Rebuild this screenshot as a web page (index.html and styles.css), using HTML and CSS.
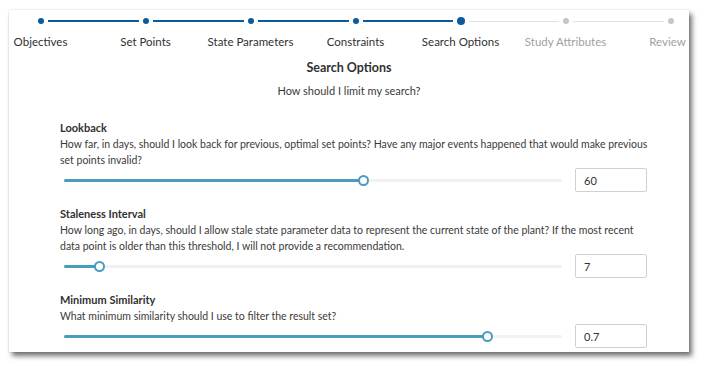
FILE: index.html
```html
<!DOCTYPE html>
<html lang="en">
<head>
    <meta charset="UTF-8">
    <meta name="viewport" content="width=device-width, initial-scale=1.0">
    <title>Search Options</title>
    <link rel="stylesheet" href="styles.css">
</head>
<body>
    <div class="card">
        <!-- wizard steps -->
        <div class="stepper">
            <div class="step done first">
                <div class="track"><span class="line"></span><span class="dot"></span><span class="line on"></span></div>
                <div class="step-label">Objectives</div>
            </div>
            <div class="step done">
                <div class="track"><span class="line on"></span><span class="dot"></span><span class="line on"></span></div>
                <div class="step-label">Set Points</div>
            </div>
            <div class="step done">
                <div class="track"><span class="line on"></span><span class="dot"></span><span class="line on"></span></div>
                <div class="step-label">State Parameters</div>
            </div>
            <div class="step done">
                <div class="track"><span class="line on"></span><span class="dot"></span><span class="line on"></span></div>
                <div class="step-label">Constraints</div>
            </div>
            <div class="step current">
                <div class="track"><span class="line on"></span><span class="dot"></span><span class="line"></span></div>
                <div class="step-label">Search Options</div>
            </div>
            <div class="step todo">
                <div class="track"><span class="line"></span><span class="dot"></span><span class="line"></span></div>
                <div class="step-label">Study Attributes</div>
            </div>
            <div class="step todo last">
                <div class="track"><span class="line"></span><span class="dot"></span><span class="line"></span></div>
                <div class="step-label">Review</div>
            </div>
        </div>

        <div class="page-head">
            <h2>Search Options</h2>
            <p>How should I limit my search?</p>
        </div>

        <div class="fields">
            <div class="field">
                <div class="field-title">Lookback</div>
                <p class="field-desc">How far, in days, should I look back for previous, optimal set points? Have any major events happened that would make previous set points invalid?</p>
                <div class="field-row">
                    <div class="slider">
                        <div class="slider-rail"></div>
                        <div class="slider-fill" style="width: 60%"></div>
                        <div class="slider-thumb" style="left: 60%"></div>
                    </div>
                    <input class="value-box" type="text" value="60">
                </div>
            </div>

            <div class="field">
                <div class="field-title">Staleness Interval</div>
                <p class="field-desc">How long ago, in days, should I allow stale state parameter data to represent the current state of the plant? If the most recent data point is older than this threshold, I will not provide a recommendation.</p>
                <div class="field-row">
                    <div class="slider">
                        <div class="slider-rail"></div>
                        <div class="slider-fill" style="width: 7%"></div>
                        <div class="slider-thumb" style="left: 7%"></div>
                    </div>
                    <input class="value-box" type="text" value="7">
                </div>
            </div>

            <div class="field">
                <div class="field-title">Minimum Similarity</div>
                <p class="field-desc">What minimum similarity should I use to filter the result set?</p>
                <div class="field-row">
                    <div class="slider">
                        <div class="slider-rail"></div>
                        <div class="slider-fill" style="width: 85%"></div>
                        <div class="slider-thumb" style="left: 85%"></div>
                    </div>
                    <input class="value-box" type="text" value="0.7">
                </div>
            </div>
        </div>
    </div>
</body>
</html>
```

FILE: styles.css
```css
* {
    margin: 0;
    padding: 0;
    box-sizing: border-box;
}

html, body {
    height: 100%;
}

body {
    font-family: Lato, 'Open Sans', sans-serif;
    color: #323130;
    background-color: #ffffff;
    padding: 10px 0 0 9px;
    overflow: hidden;
}

.card {
    width: 680px;
    height: 342px;
    background: #ffffff;
    box-shadow: 0 0 1px rgba(0, 0, 0, 0.25), 3px 4px 5px rgba(0, 0, 0, 0.55);
}

/* stepper */
.stepper {
    display: flex;
    width: 735px;
    margin-left: -21px;
    padding-top: 6px;
}

.step {
    width: 105px;
    flex-shrink: 0;
    display: flex;
    flex-direction: column;
    align-items: center;
}

.track {
    display: flex;
    align-items: center;
    width: 100%;
    height: 10px;
}

.line {
    flex: 1;
    height: 1px;
    background-color: #e1e1e1;
}

.line.on {
    height: 2px;
    background-color: #0b5a9c;
}

.first .line:first-child,
.last .line:last-child {
    visibility: hidden;
}

.dot {
    width: 6px;
    height: 6px;
    border-radius: 50%;
    margin: 0 4px;
    background-color: #0b5a9c;
}

.current .dot {
    width: 8px;
    height: 8px;
}

.todo .dot {
    background-color: #c8c6c4;
}

.step-label {
    font-size: 11.5px;
    line-height: 16px;
    margin-top: 8px;
    white-space: nowrap;
    color: #323130;
}

.todo .step-label {
    color: #a19f9d;
}

.last .step-label {
    margin-right: 6px;
}

/* heading */
.page-head {
    text-align: center;
    margin-top: 10px;
}

.page-head h2 {
    font-size: 12.5px;
    font-weight: 700;
    line-height: 16px;
}

.page-head p {
    font-size: 11px;
    line-height: 16px;
    margin-top: 7px;
    color: #3b3a39;
}

/* fields */
.fields {
    padding: 21px 0 0 51px;
    display: flex;
    flex-direction: column;
    gap: 14px;
}

.field-title {
    font-size: 11px;
    font-weight: 700;
    line-height: 16px;
}

.field-desc {
    font-size: 10.5px;
    line-height: 16px;
    max-width: 592px;
    color: #3b3a39;
}

.field-row {
    display: flex;
    align-items: center;
    height: 24px;
}

.slider {
    position: relative;
    width: 498px;
    height: 12px;
    margin-left: 4px;
}

.slider-rail,
.slider-fill {
    position: absolute;
    left: 0;
    top: 5px;
    height: 3px;
    border-radius: 2px;
}

.slider-rail {
    width: 100%;
    background-color: #f1f1f1;
}

.slider-fill {
    background-color: #4b9bbd;
}

.slider-thumb {
    position: absolute;
    top: 1px;
    width: 11px;
    height: 11px;
    margin-left: -5px;
    border: 2px solid #4b9bbd;
    border-radius: 50%;
    background: #ffffff;
}

.value-box {
    width: 72px;
    height: 24px;
    margin-left: 13px;
    border: 1px solid #d2d0ce;
    border-radius: 2px;
    padding: 0 8px;
    font-family: inherit;
    font-size: 11px;
    color: #323130;
    background: #ffffff;
}
```
